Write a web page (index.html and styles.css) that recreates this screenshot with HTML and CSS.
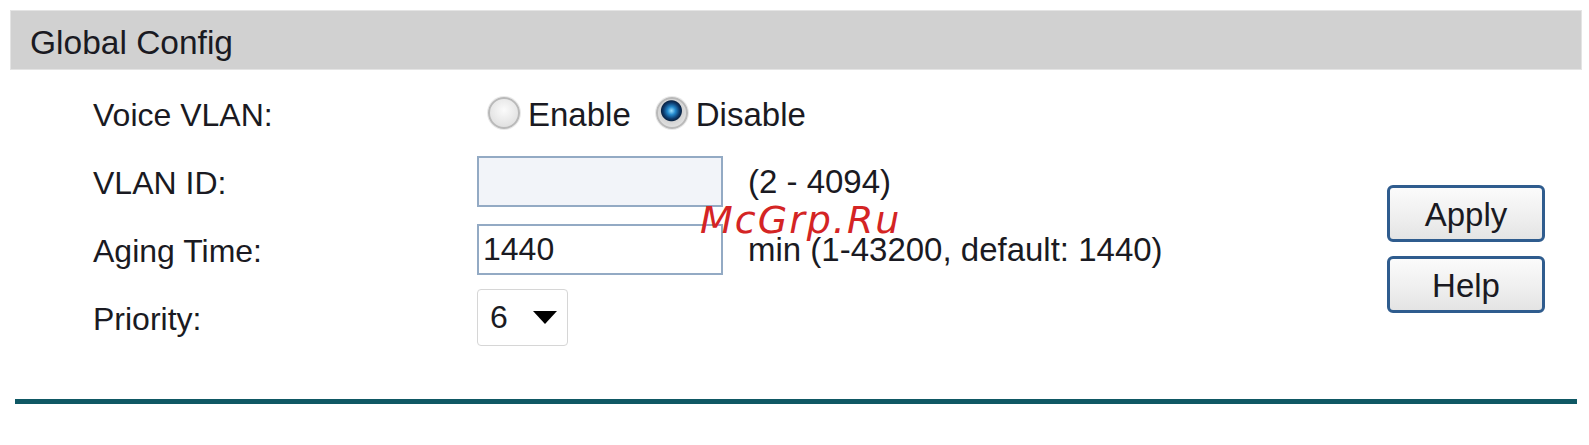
FILE: index.html
```html
<!DOCTYPE html>
<html lang="en">
<head>
  <meta charset="UTF-8" />
  <title>Global Config</title>
  <link rel="stylesheet" href="styles.css">
</head>
<body>

  <div class="title">Global Config</div>

  <div class="content">
    <form id="voiceForm" class="form">
      <label for="enable">Voice VLAN:</label>
      <div class="radios">
        <input type="radio" name="voice" id="enable" value="1" />
        <span class="opt">Enable</span>
        <input type="radio" name="voice" id="disable" value="0" checked />
        <span class="opt">Disable</span>
      </div>

      <label for="vid">VLAN ID:</label>
      <input type="text" id="vid" class="txt off" disabled />
      <span class="note">(2 - 4094)</span>

      <label for="aging">Aging Time:</label>
      <input type="text" id="aging" class="txt" value="1440" />
      <span class="note">min (1-43200, default: 1440)</span>

      <label for="prio">Priority:</label>
      <div class="select">
        <select id="prio">
          <option>0</option><option>1</option><option>2</option><option>3</option>
          <option>4</option><option>5</option><option selected>6</option><option>7</option>
        </select>
        <span class="caret"></span>
      </div>
    </form>

    <div class="buttons">
      <button type="submit" form="voiceForm">Apply</button>
      <button type="button">Help</button>
    </div>
  </div>

  <hr class="line" />

  <div class="mark">McGrp.Ru</div>

</body>
</html>
```

FILE: styles.css
```css
body { font-family: "Liberation Sans", Arial, sans-serif; font-size: 32px; color: #1a1a22; margin: 10px 7px 0 10px; position: relative; }
.title { height: 58px; line-height: 63px; font-size: 33.5px; background: #d1d1d1; border: 1px solid #e4e4e4; padding-left: 19px; }
.content { display: flex; padding: 9px 37px 0 83px; }
.form { display: grid; grid-template-columns: 384px 246px auto; grid-auto-rows: 68px; align-items: center; }
.form label { padding-top: 4px; }
.radios { grid-column: 2 / 4; display: flex; align-items: center; }
.radios input { appearance: none; -webkit-appearance: none; width: 32px; height: 32px; margin: 0 8px 0 11px; border-radius: 50%; border: 2px solid #b9b9b9; box-shadow: 0 0 0 1px #e9e9e9; background: radial-gradient(circle at 50% 40%, #fbfbfb, #d9d9d9); }
.radios input:checked { background: radial-gradient(circle at 48% 42%, #9fe2ff 0, #2489cc 4px, #0d3b6e 8px, #0a2546 10px, #d4d4d4 11px, #eeeeee 100%); }
.radios .opt { font-size: 33px; padding-top: 4px; margin-right: 14px; }
.radios .opt:last-child { margin-right: 0; }
.txt { font: inherit; color: inherit; box-sizing: border-box; width: 246px; height: 51px; padding: 0 4px; border: 2px solid #93aac4; background: #fff; margin: 0; }
.txt.off { background: #f2f4f9; }
.note { font-size: 33px; padding-left: 25px; padding-top: 2px; }
.select { position: relative; width: 91px; height: 57px; }
.select select { appearance: none; -webkit-appearance: none; font: inherit; color: inherit; box-sizing: border-box; width: 91px; height: 57px; padding: 0 0 0 12px; border: 1px solid #d6d6d6; border-radius: 4px; background: #fff; }
.caret { position: absolute; left: 56px; top: 22px; width: 0; height: 0; border-left: 12px solid transparent; border-right: 12px solid transparent; border-top: 13px solid #000; }
.buttons { margin-left: auto; margin-top: 106px; display: flex; flex-direction: column; gap: 14px; }
button { font: inherit; font-size: 33px; color: inherit; width: 158px; height: 57px; border: 3px solid #2f5c8e; border-radius: 6px; background: linear-gradient(#fbfbfb, #eeeeee 60%, #e4e4e4); padding: 2px 0 0; }
.line { border: 0; height: 5px; background: #0f5864; margin: 48px 5px 0 5px; }
.mark { position: absolute; left: 690px; top: 188px; font-family: "DejaVu Sans", sans-serif; font-style: italic; font-size: 38px; letter-spacing: 2px; color: #d42424; }
```
